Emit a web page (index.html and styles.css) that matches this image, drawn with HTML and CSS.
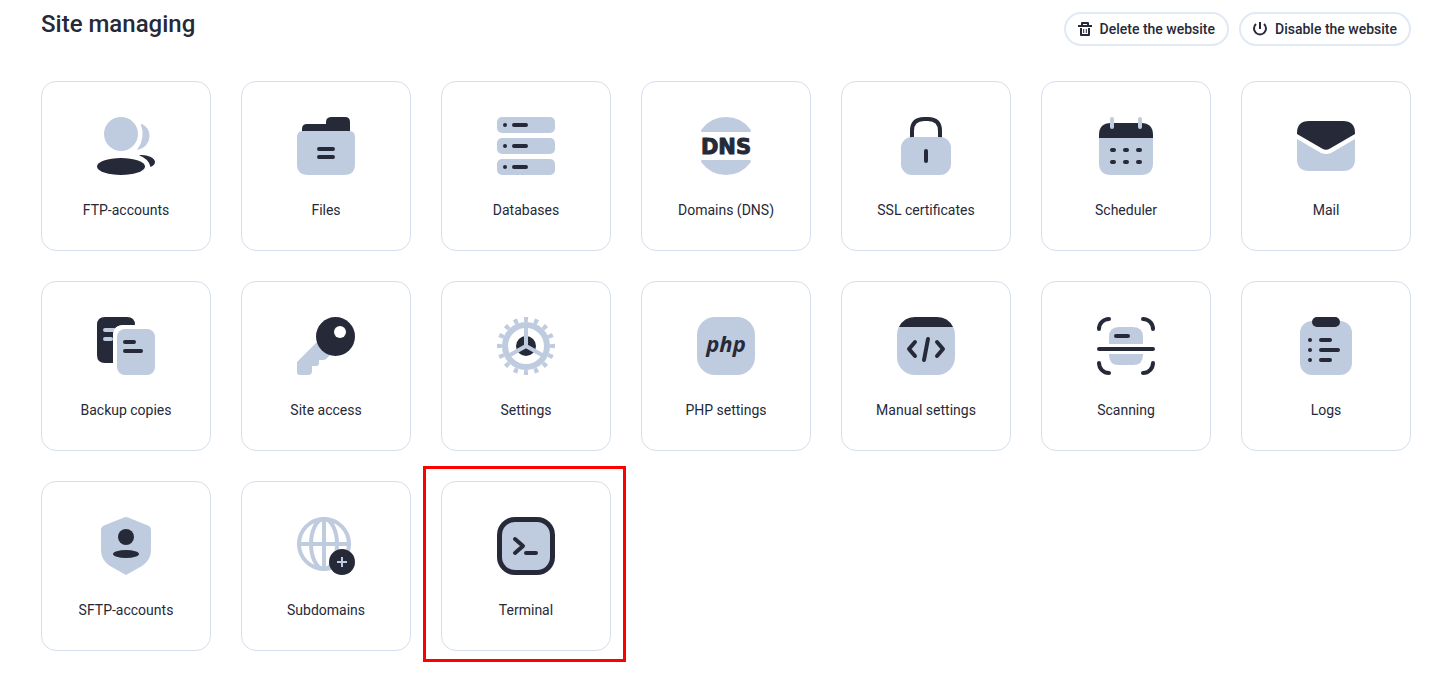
FILE: index.html
```html
<!DOCTYPE html>
<html lang="en">
<head>
  <meta charset="UTF-8">
  <meta name="viewport" content="width=device-width, initial-scale=1.0">
  <title>Site managing</title>
  <link rel="stylesheet" href="styles.css">
</head>
<body>
  <header class="header">
    <h1>Site managing</h1>
    <div class="actions">
      <button class="action-button" type="button">
        <svg class="action-icon" viewBox="0 0 14 14"><path class="line-thin" d="M0 4H14M4 4V1H10V4M3 6V13H11V6"/><path class="line-hair" d="M5.700 7V11M8.300 7V11"/></svg>
        Delete the website
      </button>
      <button class="action-button" type="button">
        <svg class="action-icon" viewBox="0 0 14 14"><path class="line-thin" d="M7 0V7M3 2A6 6 0 1 0 11 2"/></svg>
        Disable the website
      </button>
    </div>
  </header>

  <main class="grid">
    <a class="card" href="#ftp">
      <svg class="icon" viewBox="0 0 58 58">
        <circle class="light" cx="24" cy="17" r="17"/>
        <path class="light" d="M43.7 6.7C56 10 56 30 40 33Q49 21 43.7 6.7Z"/>
        <ellipse class="dark" cx="24" cy="49.5" rx="24" ry="8.5"/>
        <path class="dark" d="M42 38.3C49 37.3 58 40.5 58 45Q58 48 53.5 50Q52 42 42 38.3Z"/>
      </svg>
      <span>FTP-accounts</span>
    </a>
    <a class="card" href="#files">
      <svg class="icon" viewBox="0 0 58 58">
        <path class="dark" d="M5 18V12Q5 7 10 7H29V5Q29 0 35 0H48Q53 0 53 5V18Z"/>
        <path class="light" d="M6 14H52Q58 14 58 20V47Q58 58 47 58H11Q0 58 0 47V20Q0 14 6 14Z"/>
        <path class="line" d="M22 32H36M22 40H36"/>
      </svg>
      <span>Files</span>
    </a>
    <a class="card" href="#databases">
      <svg class="icon" viewBox="0 0 58 58">
        <rect class="light" width="58" height="16" rx="5"/>
        <rect class="light" y="21" width="58" height="16" rx="5"/>
        <rect class="light" y="42" width="58" height="16" rx="5"/>
        <path class="line" d="M8 8h0M17 8H29M8 29h0M17 29H29M8 50h0M17 50H29"/>
      </svg>
      <span>Databases</span>
    </a>
    <a class="card" href="#dns">
      <svg class="icon" viewBox="0 0 58 58">
        <path class="light" d="M5 15Q3 14 5 12Q14 0 29 0T53 12Q55 14 53 15ZM5 43H53Q55 44 53 46Q44 58 29 58T5 46Q3 44 5 43Z"/>
        <text class="dns-text" x="29" y="37">DNS</text>
      </svg>
      <span>Domains (DNS)</span>
    </a>
    <a class="card" href="#ssl">
      <svg class="icon" viewBox="0 0 58 58">
        <path class="line square" d="M15 21V14Q15 2 27 2H31Q43 2 43 14V21"/>
        <rect class="light" x="4" y="20" width="50" height="38" rx="11"/>
        <path class="line" d="M29 34V44"/>
      </svg>
      <span>SSL certificates</span>
    </a>
    <a class="card" href="#scheduler">
      <svg class="icon" viewBox="0 0 58 58">
        <path class="dark" d="M2 21V18Q2 6 14 6H44Q56 6 56 18V21Z"/>
        <path class="light" d="M2 21H56V46Q56 58 44 58H14Q2 58 2 46Z"/>
        <path class="line pale" d="M15 2V10M43 2V10"/>
        <path class="line" d="M15 33H17M28 33H30M41 33H43M15 45H17M28 45H30M41 45H43"/>
      </svg>
      <span>Scheduler</span>
    </a>
    <a class="card" href="#mail">
      <svg class="icon" viewBox="0 0 58 58">
        <path class="dark" d="M0 17V16Q0 4 12 4H46Q58 4 58 16V17L33 31.5Q29 34 25 31.5Z"/>
        <path class="light" d="M0 22L24 36Q29 38 34 36L58 22V42Q58 54 46 54H12Q0 54 0 42Z"/>
      </svg>
      <span>Mail</span>
    </a>

    <a class="card" href="#backup">
      <svg class="icon" viewBox="0 0 58 58">
        <path class="dark" d="M16 46H8Q0 46 0 38V8Q0 0 8 0H30Q38 0 38 8H27Q16 8 16 19Z"/>
        <path class="line pale" d="M8 13H17M8 22H14"/>
        <path class="white" d="M38 8H27Q16 8 16 19V46H20V12H38Z"/>
        <rect class="light" x="20" y="12" width="38" height="46" rx="8"/>
        <path class="line" d="M28 25H37M28 34H44"/>
      </svg>
      <span>Backup copies</span>
    </a>
    <a class="card" href="#access">
      <svg class="icon" viewBox="0 0 58 58">
        <path class="light" d="M0 45L20 25L33 38L29 42Q28 43 26 43H22V46Q22 49 19 49H15V54Q15 58 11 58H3Q0 58 0 55Z"/>
        <circle class="dark" cx="38.5" cy="19.5" r="19.5"/>
        <circle class="white" cx="43" cy="15" r="6"/>
      </svg>
      <span>Site access</span>
    </a>
    <a class="card" href="#settings">
      <svg class="icon" viewBox="0 0 58 58">
        <circle class="gear-teeth" cx="29" cy="29" r="26.5" pathLength="160"/>
        <circle class="gear-ring" cx="29" cy="29" r="21"/>
        <circle class="dark" cx="29" cy="29" r="10"/>
        <path class="line pale" d="M29 10V29L13 38M29 29L45 38"/>
      </svg>
      <span>Settings</span>
    </a>
    <a class="card" href="#php">
      <svg class="icon" viewBox="0 0 58 58">
        <rect class="light" width="58" height="58" rx="18"/>
        <text class="php-text" x="29" y="35">php</text>
      </svg>
      <span>PHP settings</span>
    </a>
    <a class="card" href="#manual">
      <svg class="icon" viewBox="0 0 58 58">
        <rect class="light" width="58" height="58" rx="18"/>
        <path class="dark" d="M2 10Q7 0 18 0H40Q51 0 56 10Z"/>
        <path class="line" d="M18 25L12 32L18 39M31 22L27 43M40 25L46 32L40 39"/>
      </svg>
      <span>Manual settings</span>
    </a>
    <a class="card" href="#scanning">
      <svg class="icon" viewBox="0 0 58 58">
        <path class="light" d="M12 27V20Q12 10 22 10H36Q46 10 46 20V27ZM12 37H46V38Q46 48 36 48H22Q12 48 12 38Z"/>
        <path class="line" d="M2 12A10 10 0 0 1 12 2M46 2A10 10 0 0 1 56 12M2 46A10 10 0 0 0 12 56M46 56A10 10 0 0 0 56 46M2 32H56M19 19H31"/>
      </svg>
      <span>Scanning</span>
    </a>
    <a class="card" href="#logs">
      <svg class="icon" viewBox="0 0 58 58">
        <rect class="light" x="3" y="4" width="52" height="54" rx="12"/>
        <rect class="dark" x="15" width="28" height="10" rx="5"/>
        <path class="line" d="M13 23h0M24 23H33M13 33h0M24 33H41M13 43h0M24 43H33"/>
      </svg>
      <span>Logs</span>
    </a>

    <a class="card" href="#sftp">
      <svg class="icon" viewBox="0 0 58 58">
        <path class="light" d="M27 0.5Q29 -0.5 31 0.5L51 8.5Q54 10 54 13V33Q54 43 45 49L29 58L13 49Q4 43 4 33V13Q4 10 7 8.5Z"/>
        <circle class="dark" cx="29" cy="20" r="8"/>
        <ellipse class="dark" cx="29" cy="37" rx="13" ry="4"/>
      </svg>
      <span>SFTP-accounts</span>
    </a>
    <a class="card" href="#subdomains">
      <svg class="icon" viewBox="0 0 58 58">
        <circle class="line pale" cx="27" cy="27" r="25"/>
        <ellipse class="line pale" cx="27" cy="27" rx="13" ry="25"/>
        <path class="line pale" d="M27 2V52M2 27H52"/>
        <circle class="dark" cx="45" cy="45" r="13"/>
        <path class="plus" d="M40 45H50M45 40V50"/>
      </svg>
      <span>Subdomains</span>
    </a>
    <a class="card marked" href="#terminal">
      <svg class="icon" viewBox="0 0 58 58">
        <rect class="dark" width="58" height="58" rx="18"/>
        <rect class="light" x="5" y="5" width="48" height="48" rx="13"/>
        <path class="line" d="M18 22L26 29L18 36M29 36H39"/>
      </svg>
      <span>Terminal</span>
    </a>
  </main>
</body>
</html>
```
FILE: styles.css
```css
* {
  box-sizing: border-box;
}
body {
  margin: 0;
  padding: 12px 33px 25px 41px;
  background-color: #fff;
  color: #262938;
  font-family: Roboto, sans-serif;
  font-size: 14px;
}
.header {
  display: flex;
  justify-content: space-between;
  align-items: flex-start;
  margin-bottom: 35px;
}
h1 {
  margin: 0;
  font-size: 24px;
  font-weight: 500;
  line-height: 24px;
}
.actions {
  display: flex;
  gap: 10px;
}
.action-button {
  display: flex;
  align-items: center;
  gap: 8px;
  height: 34px;
  padding: 0 12px;
  border: 2px solid #e1e9f5;
  border-radius: 17px;
  background-color: #fff;
  color: #262938;
  font-family: inherit;
  font-size: 14px;
  font-weight: 500;
  cursor: pointer;
}
.action-icon {
  width: 14px;
  height: 14px;
}
.grid {
  display: grid;
  grid-template-columns: repeat(auto-fill, minmax(170px, 1fr));
  gap: 30px;
}
.card {
  position: relative;
  display: flex;
  flex-direction: column;
  align-items: center;
  gap: 24px;
  padding: 35px 10px 29px;
  border: 1px solid #d5deea;
  border-radius: 15px;
  color: #262938;
  line-height: 22px;
  text-decoration: none;
}
.card:hover,
.action-button:hover {
  border-color: #bfcbdf;
}
.icon {
  width: 58px;
  height: 58px;
}

/* Red frame around the highlighted card */
.marked::after {
  content: "";
  position: absolute;
  top: -16px;
  right: -16px;
  bottom: -12px;
  left: -19px;
  border: 3px solid #ff0000;
  pointer-events: none;
}

/* Icon parts */
.light {
  fill: #bfcbdf;
}
.dark {
  fill: #262938;
}
.white {
  fill: #fff;
}
.line,
.line-thin,
.line-hair {
  fill: none;
  stroke: #262938;
  stroke-width: 4px;
  stroke-linecap: round;
  stroke-linejoin: round;
}
.line-thin {
  stroke-width: 2px;
  stroke-linecap: butt;
}
.line-hair {
  stroke-width: 1px;
  stroke-linecap: butt;
}
.square {
  stroke-linecap: butt;
}
.pale {
  stroke: #bfcbdf;
}
.plus {
  stroke: #bfcbdf;
  stroke-width: 2px;
}
.gear-ring {
  fill: none;
  stroke: #bfcbdf;
  stroke-width: 6px;
}
.gear-teeth {
  fill: none;
  stroke: #bfcbdf;
  stroke-width: 5px;
  stroke-dasharray: 4 6;
  stroke-dashoffset: 2px;
}
.dns-text,
.php-text {
  fill: #262938;
  font-size: 22px;
  font-weight: 700;
  text-anchor: middle;
}
.dns-text {
  stroke: #262938;
  stroke-width: 1px;
  stroke-linejoin: round;
  font-family: "DejaVu Sans", sans-serif;
  font-size: 21px;
}
.php-text {
  font-family: "Noto Sans", sans-serif;
  font-style: italic;
}
```
